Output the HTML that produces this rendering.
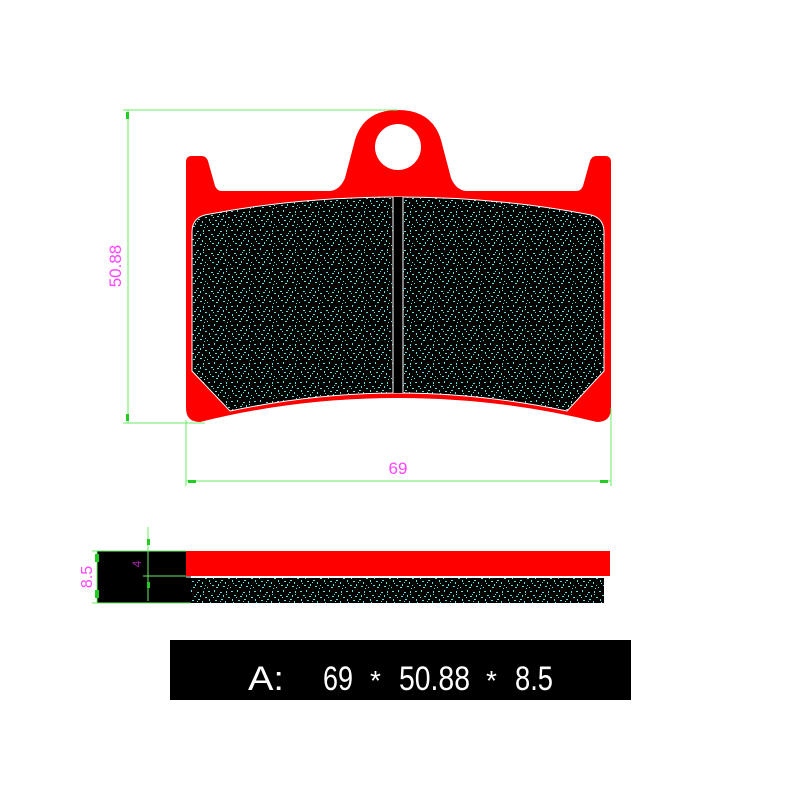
<!DOCTYPE html>
<html><head><meta charset="utf-8"><style>html,body{margin:0;padding:0;background:#fff;width:800px;height:800px;overflow:hidden}</style></head>
<body>
<svg width="800" height="800" viewBox="0 0 800 800" xmlns="http://www.w3.org/2000/svg">
<defs>
<pattern id="sp" width="23" height="19" patternUnits="userSpaceOnUse">
<rect width="23" height="19" fill="#000"/>
<g fill="#5ee0e0">
<rect x="1" y="2" width="2" height="1"/><rect x="7" y="1" width="1" height="2"/><rect x="13" y="3" width="2" height="1"/><rect x="19" y="2" width="1" height="2"/>
<rect x="4" y="6" width="2" height="1"/><rect x="10" y="7" width="2" height="1"/><rect x="16" y="6" width="1" height="2"/><rect x="21" y="8" width="2" height="1"/>
<rect x="2" y="10" width="1" height="2"/><rect x="8" y="11" width="2" height="1"/><rect x="14" y="10" width="2" height="1"/><rect x="18" y="12" width="1" height="2"/>
<rect x="5" y="15" width="2" height="1"/><rect x="11" y="14" width="1" height="2"/><rect x="16" y="16" width="2" height="1"/><rect x="21" y="15" width="1" height="1"/>
<rect x="0" y="17" width="1" height="1"/><rect x="9" y="17" width="2" height="1"/><rect x="12" y="5" width="1" height="1"/><rect x="6" y="8" width="1" height="1"/>
<rect x="19" y="5" width="1" height="1"/><rect x="3" y="13" width="1" height="1"/><rect x="13" y="12" width="1" height="1"/><rect x="20" y="18" width="1" height="1"/>
</g>
</pattern>
</defs>
<path d="M186 162 Q186 156 192 156 L202 156 Q206 156 208 161 L215 186 Q217 191 222 191 L330 191 Q340 190 345 178 L355 140 Q364 110 398 110 Q432 110 441 140 L451 178 Q456 190 466 191 L576 191 Q581 191 583 186 L590 161 Q592 156 596 156 L605 156 Q611 156 611 162 L611 408 Q611 422 597 422 Q500 398 398 398 Q296 398 200 422 Q186 422 186 408 Z" fill="#ff0000"/>
<circle cx="398" cy="147" r="23" fill="#fff"/>
<path d="M192 232 Q192 216 210 214 Q300 197 398 197 Q496 197 586 214 Q604 216 604 232 L604 371 L567 411 Q480 393 398 393 Q316 393 230 411 L192 371 Z" fill="url(#sp)" stroke="#fff" stroke-width="1"/>
<rect x="393" y="197" width="10" height="196" fill="#000"/>
<line x1="393" y1="197" x2="393" y2="393" stroke="#fff"/><line x1="403" y1="197" x2="403" y2="393" stroke="#fff"/>
<g stroke="#66ee66" stroke-width="1" fill="none">
<line x1="123" y1="110" x2="398" y2="110"/>
<line x1="123" y1="423" x2="205" y2="423"/>
<line x1="128" y1="110" x2="128" y2="423"/>
<line x1="186" y1="420" x2="186" y2="486"/>
<line x1="611" y1="408" x2="611" y2="486"/>
<line x1="186" y1="481" x2="611" y2="481"/>
</g>
<g fill="#22cc22"><rect x="126" y="112" width="3" height="7"/><rect x="126" y="414" width="3" height="7"/><rect x="188" y="480" width="8" height="3"/><rect x="600" y="480" width="8" height="3"/></g>
<text x="121" y="266" transform="rotate(-90 121 266)" font-family="Liberation Sans,sans-serif" font-size="17" fill="#ff44ff" text-anchor="middle">50.88</text>
<text x="398" y="474" font-family="Liberation Sans,sans-serif" font-size="17" fill="#ff44ff" text-anchor="middle">69</text>
<rect x="97" y="551" width="89" height="52" fill="#000"/>
<rect x="97" y="576" width="94" height="27" fill="#000"/>
<rect x="186" y="551" width="424" height="25" fill="#ff0000"/>
<rect x="191" y="578" width="413" height="25" fill="url(#sp)"/>
<line x1="186" y1="577" x2="610" y2="577" stroke="#fff"/>
<g stroke="#66ee66" stroke-width="1"><line x1="92" y1="551" x2="186" y2="551"/><line x1="92" y1="603" x2="191" y2="603"/><line x1="97" y1="551" x2="97" y2="603"/><line x1="148" y1="527" x2="148" y2="601"/><line x1="143" y1="576" x2="186" y2="576"/></g>
<g fill="#22cc22"><rect x="95" y="554" width="4" height="8"/><rect x="95" y="590" width="4" height="8"/><rect x="147" y="539" width="3" height="6"/><rect x="147" y="582" width="3" height="6"/></g>
<text x="92" y="577" transform="rotate(-90 92 577)" font-family="Liberation Sans,sans-serif" font-size="16" fill="#ff44ff" text-anchor="middle">8.5</text>
<text x="141" y="564" transform="rotate(-90 141 564)" font-family="Liberation Sans,sans-serif" font-size="12" fill="#aa22aa" text-anchor="middle">4</text>
<rect x="170" y="640" width="461" height="60" fill="#000"/>
<g font-family="Liberation Sans,sans-serif" font-size="34" fill="#fff">
<text x="248" y="690" textLength="36" lengthAdjust="spacingAndGlyphs">A:</text>
<text x="323" y="690" textLength="30" lengthAdjust="spacingAndGlyphs">69</text>
<text x="370" y="690" font-size="28">*</text>
<text x="399" y="690" textLength="71" lengthAdjust="spacingAndGlyphs">50.88</text>
<text x="486" y="690" font-size="28">*</text>
<text x="515" y="690" textLength="38" lengthAdjust="spacingAndGlyphs">8.5</text>
</g>
</svg>
</body></html>
